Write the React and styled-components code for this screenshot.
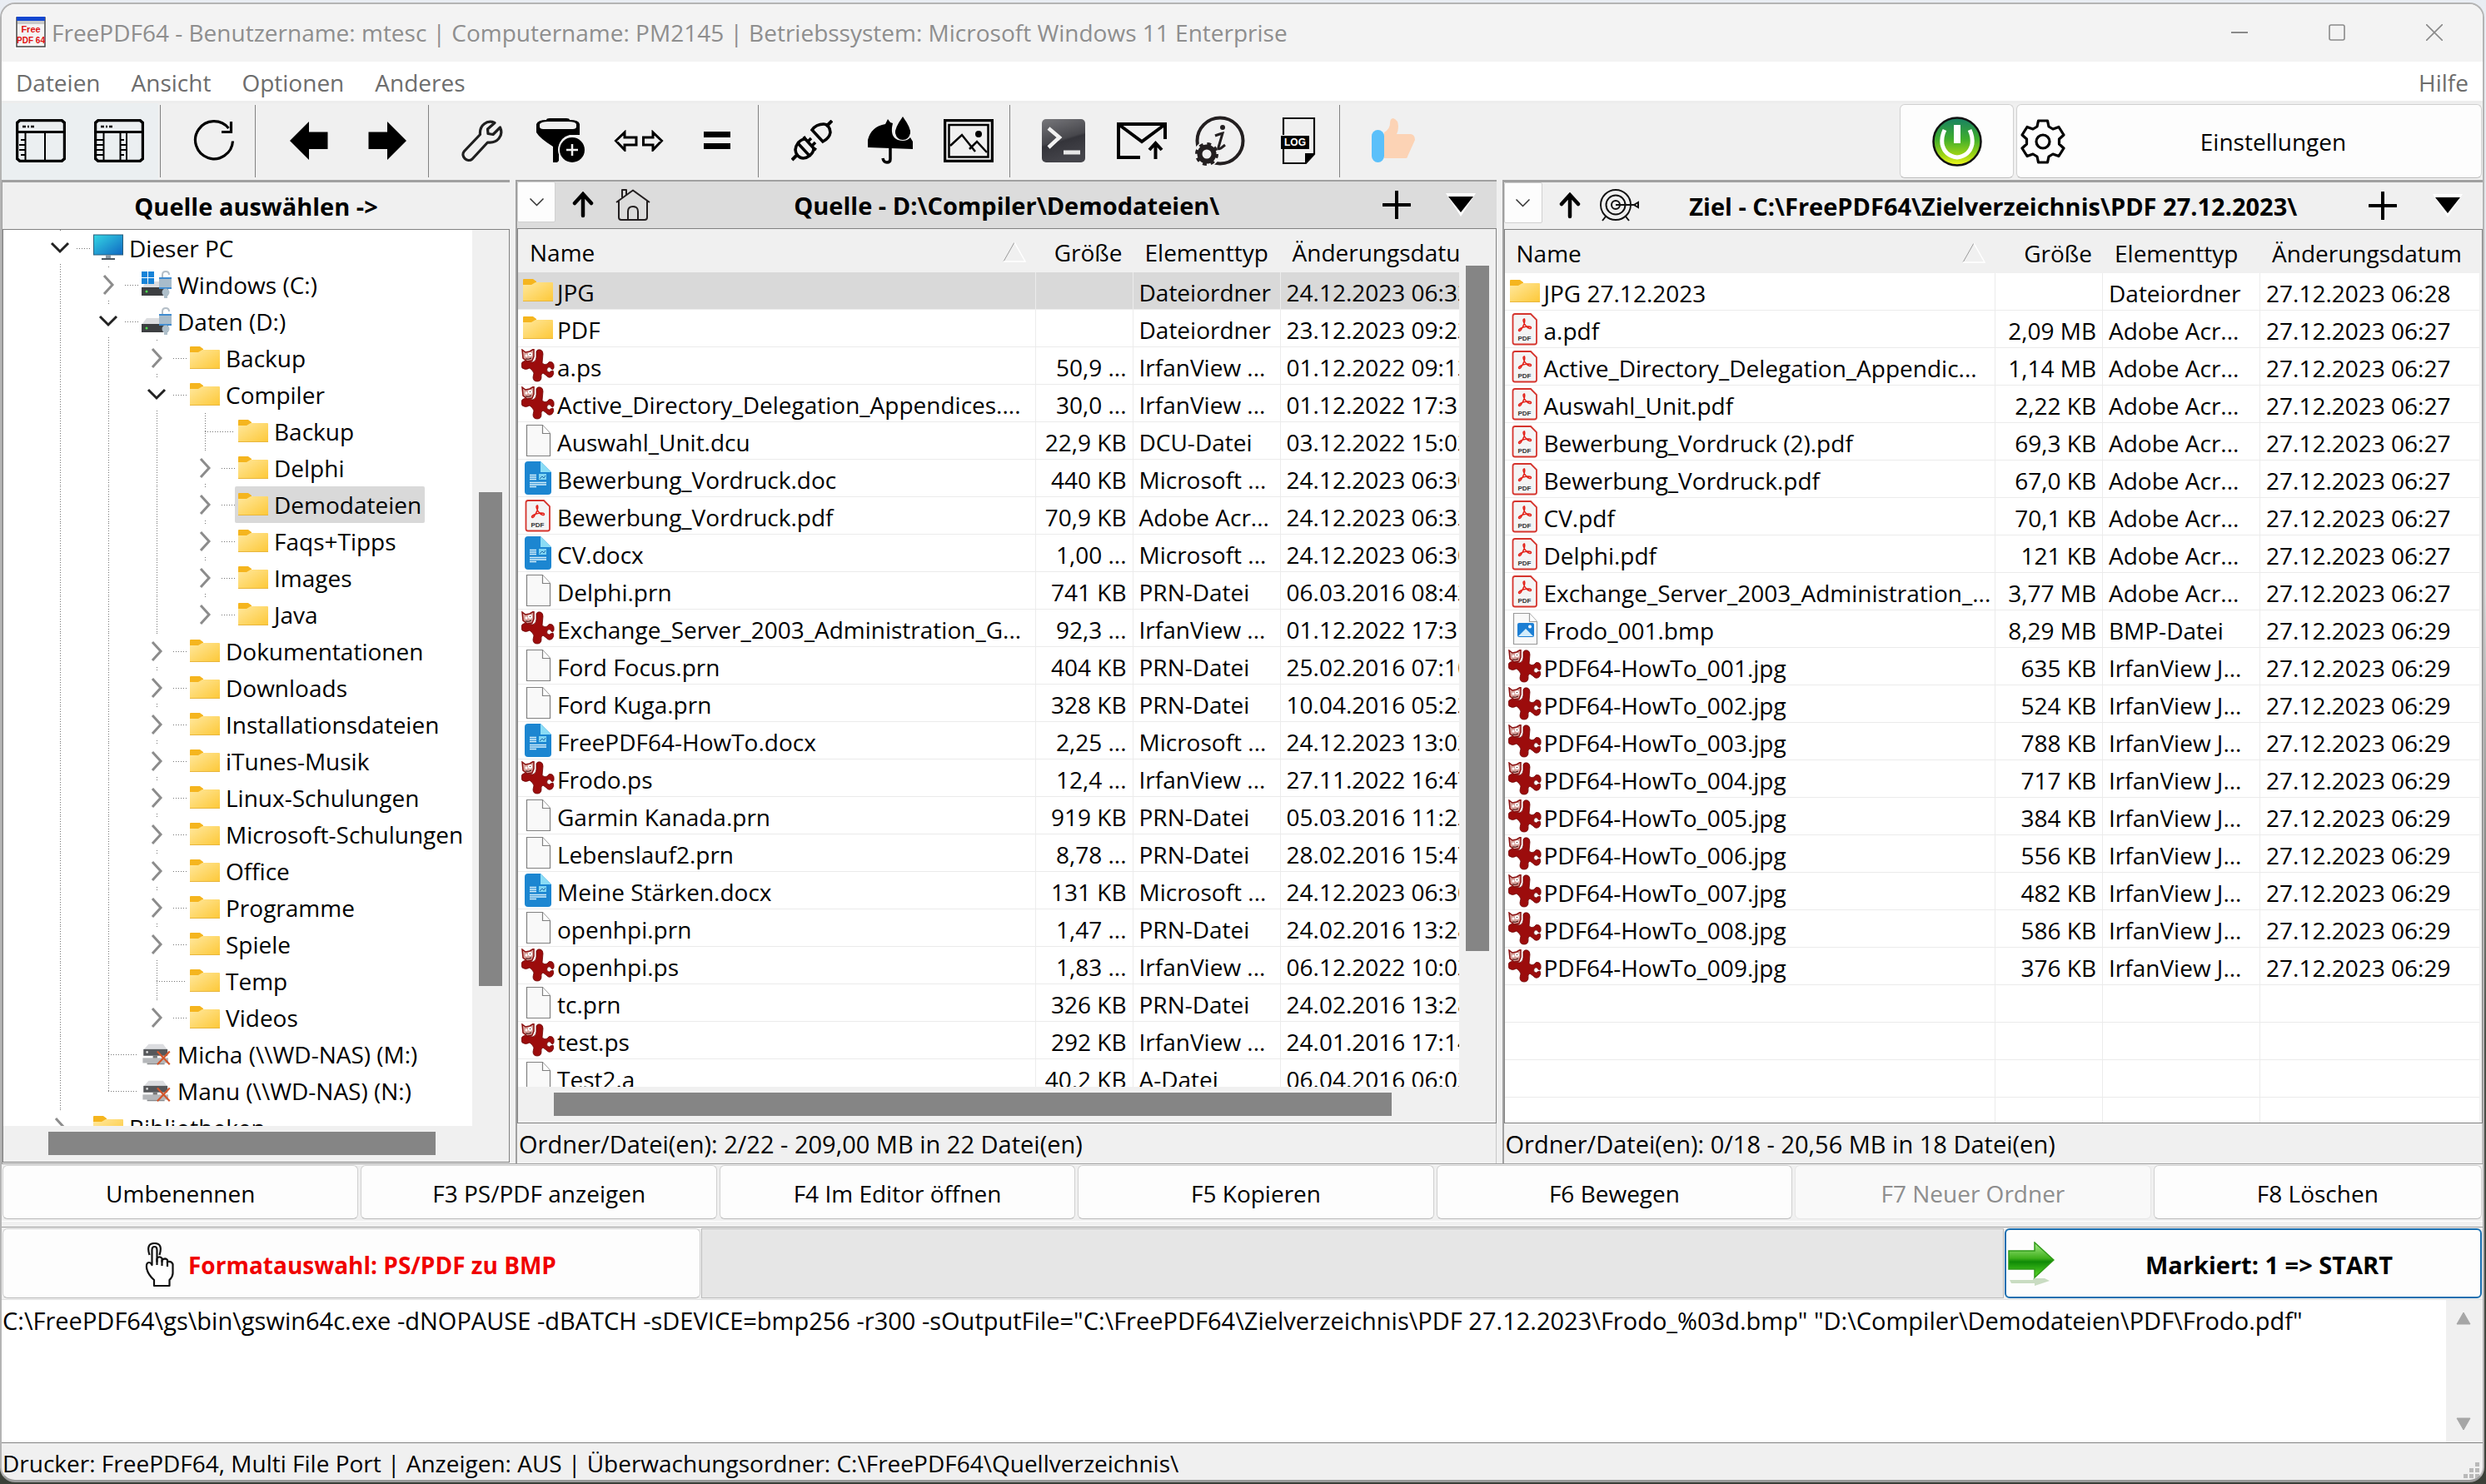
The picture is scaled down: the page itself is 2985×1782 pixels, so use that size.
import React from "react";
import styled, { createGlobalStyle, css } from "styled-components";

const FACE = "#f0f0f0";
const EDGE = "#a0a0a0";
const LINE = "#828282";
const THUMB = "#858585";
const SANS = '"Open Sans", "Noto Sans", sans-serif';

const GlobalStyle = createGlobalStyle`
  * { box-sizing: border-box; }
  html, body { margin: 0; height: 100%; }
  body {
    font-family: ${SANS};
    font-size: 28px;
    line-height: 40px;
    color: #000;
    background: linear-gradient(to bottom, #e9edf3 0, #d9d9d9 40%, #4b5048 70%, #3b4038 100%);
  }
  button, textarea {
    font: inherit;
    color: inherit;
    margin: 0;
    padding: 0;
    border: 0;
    background: none;
  }
  svg { display: block; flex: none; }
`;

/* ---------- window ---------- */

const Desktop = styled.div`
  height: 100vh;
  padding: 3px 2px 2px 0;
`;

const Window = styled.div`
  height: 100%;
  display: flex;
  flex-direction: column;
  overflow: hidden;
  background: ${FACE};
  border: 2px solid #b4b4b4;
  border-bottom: 3px solid #9a9a9a;
  border-radius: 18px;
`;

const TitleBar = styled.header`
  flex: none;
  display: flex;
  align-items: center;
  height: 69px;
  padding: 0 0 2px 16px;
  background: #f3f3f3;
`;

const WindowTitle = styled.h1`
  flex: 1;
  margin: 0 0 0 6px;
  font-size: inherit;
  font-weight: 400;
  color: #8e8e8e;
  white-space: nowrap;
`;

const CaptionButton = styled.button`
  width: 117px;
  height: 66px;
  display: grid;
  place-items: center;
`;

const MenuBar = styled.nav`
  flex: none;
  display: flex;
  gap: 37px;
  height: 50px;
  padding: 2px 17px 0;
  background: #fff;
  border-bottom: 3px solid #ededed;
  color: #6d6d6d;
`;

const MenuItem = styled.button`
  &:last-child { margin-left: auto; }
`;

/* ---------- toolbar ---------- */

const ToolBar = styled.div`
  flex: none;
  display: flex;
  align-items: stretch;
  height: 92px;
`;

const ToolButton = styled.button`
  width: 94px;
  display: grid;
  place-items: center;
  padding-bottom: 2px;
  background: ${(p) => (p.$pressed ? "#ebeff1" : "transparent")};
`;

const ToolDivider = styled.span`
  width: 20px;
  margin: 2px 0 3px;
  background: linear-gradient(${LINE}, ${LINE}) 2px 0 / 1px 100% no-repeat;
`;

const PushButton = styled.button`
  background: #fdfdfd;
  border: 1px solid #d0d0d0;
  border-bottom-color: #bababa;
  border-radius: 6px;
  text-align: center;
  white-space: nowrap;
  &:disabled { color: #8e8e8e; background: #f9f9f9; border-color: #e6e6e6; }
`;

const ToolActions = styled.div`
  display: flex;
  gap: 3px;
  margin-left: auto;
  padding: 1px 1px 2px 0;
`;

const PowerButton = styled(PushButton)`
  width: 137px;
  display: grid;
  place-items: center;
`;

const SettingsButton = styled(PushButton)`
  width: 559px;
  display: grid;
  grid-template-columns: 60px 1fr;
  align-items: center;
  padding: 0 6px 0 4px;
`;

/* ---------- panels ---------- */

const Panels = styled.main`
  flex: 1;
  min-height: 0;
  display: grid;
  grid-template-columns: 610px minmax(0, 1fr) minmax(0, 1fr);
  gap: 7px;
`;

const Panel = styled.section`
  min-width: 0;
  min-height: 0;
  display: flex;
  flex-direction: column;
  border-top: ${(p) => (p.$active ? 2 : 3)}px solid ${EDGE};
  border-left: ${(p) => (p.$files ? 2 : 1)}px solid ${EDGE};
`;

const PanelHead = styled.div`
  flex: none;
  display: grid;
  grid-template-columns: 1fr auto 1fr;
  height: 56px;
  background: ${(p) => (p.$active ? "#dcdcdc" : FACE)};
`;

const PanelTitle = styled.h2`
  grid-column: 2;
  margin: 0;
  padding-top: 9px;
  font-size: 29px;
  font-weight: 700;
  line-height: 40px;
  text-align: center;
  white-space: nowrap;
`;

const HeadTools = styled.div`
  display: flex;
  align-items: flex-start;
  justify-content: ${(p) => (p.$end ? "flex-end" : "flex-start")};
`;

const DropButton = styled.button`
  width: 46px;
  height: 49px;
  display: grid;
  place-items: center;
  background: #fdfdfd;
  border: 1px solid #d0d0d0;
  border-radius: 2px;
`;

const HeadButton = styled.button`
  width: ${(p) => p.$width}px;
  height: 56px;
  display: grid;
  place-items: center;
`;

const Well = styled.div`
  flex: 1;
  min-height: 0;
  display: grid;
  grid-template-columns: minmax(0, 1fr) ${(p) => (p.$scroll ? "44px" : "3px")};
  grid-template-rows: minmax(0, 1fr) ${(p) => (p.$scroll ? "43px" : "0")};
  background: ${FACE};
  border: 1px solid ${LINE};
  margin-bottom: ${(p) => (p.$flush ? 1 : 0)}px;
`;

const Pane = styled.div`
  min-width: 0;
  min-height: 0;
  overflow: hidden;
  background: #fff;
`;

const VTrack = styled.div`
  display: grid;
  grid-template-rows: ${(p) => p.$parts.map((n) => `${n}fr`).join(" ")};
  padding: 0 8px;
`;

const HTrack = styled.div`
  display: grid;
  grid-template-columns: ${(p) => p.$parts.map((n) => `${n}fr`).join(" ")};
  padding: 7px 0 8px;
`;

const VThumb = styled.div`
  grid-row: 2;
  background: ${THUMB};
`;

const HThumb = styled.div`
  grid-column: 2;
  background: ${THUMB};
`;

const PanelStatus = styled.div`
  flex: none;
  height: 48px;
  padding: 5px 0 0 2px;
  border-right: 1px solid #c8c8c8;
  font-size: 29px;
  white-space: nowrap;
`;

/* ---------- tree ---------- */

const Tree = styled.ul`
  margin: 0;
  padding: 0 0 0 39px;
  list-style: none;
`;

const TreeRow = styled.li`
  display: flex;
  height: 44px;
`;

const dotsV = "repeating-linear-gradient(to bottom, #777 0 1px, transparent 1px 3px)";
const dotsH = "repeating-linear-gradient(to right, #777 0 1px, transparent 1px 3px)";

const Guide = styled.span`
  flex: none;
  width: 58px;
  background: ${dotsV} 29px 0 / 1px 100% no-repeat;
`;

const Branch = styled.span`
  flex: none;
  width: 65px;
  padding-left: 17px;
  display: flex;
  align-items: center;
  ${(p) =>
    p.$kind === "leaf"
      ? css`
          background: ${dotsV} 29px 0 / 1px ${p.$last ? "50%" : "100%"} no-repeat,
            ${dotsH} 29px 22px / 36px 1px no-repeat;
        `
      : css`
          background: ${dotsV} 29px 0 / 1px 3px no-repeat,
            ${dotsV} 29px 41px / 1px ${p.$last ? "0" : "3px"} no-repeat,
            ${dotsH} 49px 22px / 16px 1px no-repeat;
        `}
`;

const Node = styled.button`
  display: flex;
  align-items: center;
  gap: 5px;
  padding: 0 4px 0 2px;
  border-radius: 2px;
  white-space: nowrap;
  background: ${(p) => (p.$selected ? "#d9d9d9" : "transparent")};
`;

/* ---------- file table ---------- */

const FileTable = styled.table`
  width: ${(p) => (p.$wide ? "calc(100% + 60px)" : "100%")};
  table-layout: fixed;
  border-collapse: separate;
  border-spacing: 0;
`;

const Head = styled.th`
  height: 52px;
  padding: ${(p) => (p.$right ? "3px 13px 0 0" : "3px 0 0 14px")};
  font-weight: 400;
  text-align: ${(p) => (p.$right ? "right" : "left")};
  white-space: nowrap;
  background: ${FACE};
`;

const NameHead = styled.div`
  display: flex;
  align-items: center;
  justify-content: space-between;
  padding-right: 12px;
`;

const FileRow = styled.tr`
  background: ${(p) => (p.$selected ? "#d9d9d9" : "#fff")};
`;

const Cell = styled.td`
  height: 45px;
  padding: ${(p) => (p.$right ? "3px 7px 0 0" : "3px 0 0 7px")};
  overflow: hidden;
  text-align: ${(p) => (p.$right ? "right" : "left")};
  white-space: nowrap;
  border-bottom: 1px solid #ebebeb;
  border-right: 1px solid #ececec;
  &:last-child { border-right: 0; }
`;

const NameCell = styled(Cell)`
  padding: 0 0 0 4px;
`;

const FileName = styled.span`
  display: flex;
  align-items: center;
  gap: 3px;
  height: 44px;
`;

const FileText = styled.span`
  padding-top: 3px;
`;

/* ---------- lower bars ---------- */

const FunctionBar = styled.div`
  flex: none;
  display: grid;
  grid-template-columns: repeat(6, 427fr) 394fr;
  gap: 3px;
  height: 70px;
  padding: 1px 1px 2px;
  border-top: 1px solid ${EDGE};
  border-bottom: 1px solid #fff;
`;

const FunctionButton = styled(PushButton)`
  padding-top: 3px;
`;

const ActionBar = styled.div`
  flex: none;
  display: grid;
  grid-template-columns: 838px 1fr 573px;
  gap: 1px;
  height: 88px;
  margin-top: 6px;
  padding: 1px;
  border-top: 1px solid ${EDGE};
  border-bottom: 1px solid #e2e2e2;
`;

const FormatButton = styled(PushButton)`
  display: flex;
  align-items: center;
  gap: 16px;
  padding: 3px 0 0 170px;
  color: #f00000;
  font-weight: 700;
`;

const Progress = styled.progress`
  appearance: none;
  width: 100%;
  height: 100%;
  border: 1px solid #bcbcbc;
  background: #e6e6e6;
  &::-webkit-progress-bar { background: #e6e6e6; }
`;

const StartButton = styled(PushButton)`
  display: grid;
  grid-template-columns: 60px 1fr;
  align-items: center;
  padding: 3px 0 0 2px;
  border: 2px solid #1a6fb0;
  font-size: 29px;
  font-weight: 700;
`;

const Console = styled.div`
  flex: none;
  display: grid;
  grid-template-columns: 1fr 44px;
  height: 171px;
`;

const ConsoleText = styled.textarea`
  resize: none;
  outline: 0;
  padding: 5px 0 0 1px;
  background: #fff;
  font-size: 29px;
  overflow: hidden;
`;

const ConsoleScroll = styled.div`
  display: flex;
  flex-direction: column;
  justify-content: space-between;
  align-items: center;
  padding: 14px 2px 14px 0;
`;

const StatusBar = styled.footer`
  flex: none;
  display: flex;
  align-items: flex-end;
  justify-content: space-between;
  height: 45px;
  padding: 0 3px 0 1px;
  border-top: 1px solid ${LINE};
  white-space: nowrap;
`;

/* ---------- icons ---------- */

const AppIcon = () => (
  <svg width="38" height="40" viewBox="0 0 38 40">
    <rect width="38" height="40" fill="#fff" />
    <rect x="2" y="2" width="34" height="35" fill="#f4f4f4" stroke="#444" strokeWidth="1.5" />
    <rect x="2" y="1" width="34" height="5" fill="#1347d0" />
    <rect x="3" y="6" width="32" height="4" fill="#c9c9c9" />
    <text x="19" y="20" fontSize="11" fontWeight="700" fill="#e01010" textAnchor="middle" fontFamily="Liberation Sans, sans-serif">Free</text>
    <text x="19" y="33" fontSize="10" fontWeight="700" fill="#e01010" textAnchor="middle" fontFamily="Liberation Sans, sans-serif">PDF 64</text>
  </svg>
);

const Minimize = () => (
  <svg width="20" height="20" viewBox="0 0 20 20"><path d="M0 10h20" stroke="#8a8a8a" strokeWidth="2" /></svg>
);
const Maximize = () => (
  <svg width="20" height="20" viewBox="0 0 20 20"><rect x="1" y="1" width="18" height="18" rx="2" fill="none" stroke="#8a8a8a" strokeWidth="1.6" /></svg>
);
const Close = () => (
  <svg width="20" height="20" viewBox="0 0 20 20"><path d="M0 0l20 20M20 0L0 20" stroke="#8a8a8a" strokeWidth="1.6" /></svg>
);

const LayoutOne = () => (
  <svg width="60" height="52" viewBox="0 0 60 52" fill="none" stroke="#000">
    <path d="M5 1.500h50l3.500 3v43l-3.500 3H5l-3.500-3v-43z" strokeWidth="3.500" />
    <path d="M2 15.500h56" strokeWidth="3" />
    <path d="M11.500 16v34M35 16v34" strokeWidth="2" />
    <path d="M8 9h4M14 9h2M18 9h4" strokeWidth="2.500" />
    <path d="M6 25h5M4 31h8M4 37h8M6 43h5" strokeWidth="2" />
  </svg>
);
const LayoutTwo = () => (
  <svg width="60" height="52" viewBox="0 0 60 52" fill="none" stroke="#000">
    <path d="M5 1.500h50l3.500 3v43l-3.500 3H5l-3.500-3v-43z" strokeWidth="3.500" />
    <path d="M2 15.500h56" strokeWidth="3" />
    <path d="M11.500 16v34M31.500 16v34M39 16v34" strokeWidth="2" />
    <path d="M8 9h4M14 9h2M18 9h4" strokeWidth="2.500" />
    <path d="M3 25h8M3 31h8M3 37h8M3 43h8M32 25h4M32 31h7M32 37h7M32 43h4" strokeWidth="2" />
  </svg>
);
const Refresh = () => (
  <svg width="50" height="52" viewBox="0 0 50 52" fill="none" stroke="#000" strokeWidth="3.200">
    <path d="M47.500 26.500a22.500 22.500 0 1 1-5-15.500" />
    <path d="M45.500 3v12.500H34" />
  </svg>
);
const ArrowLeft = () => (
  <svg width="46" height="46" viewBox="0 0 46 46"><path d="M0 23L23 0v12.500h22.500v20.500H23V46z" /></svg>
);
const ArrowRight = () => (
  <svg width="46" height="46" viewBox="0 0 46 46"><path d="M46 23L23 0v12.500H.5v20.500H23V46z" /></svg>
);
const Wrench = () => (
  <svg width="50" height="52" viewBox="0 0 50 52" fill="none" stroke="#1f1f1f" strokeWidth="3.200" strokeLinejoin="round">
    <path d="M40 4.500C31 .5 21.500 7 22.500 18.500L3.500 38.500c-5 6 3.500 14.500 9.500 9.500l18.500-20C43 29.500 51 20 46.500 10L38 18.500l-6-1-.5-5.500z" />
  </svg>
);
const FunnelPlus = () => (
  <svg width="58" height="54" viewBox="0 0 58 54">
    <path d="M0 7Q2 2 12 2q0-2 4-2h20q4 0 4 2 11 0 12 5v13H40q-12 3-13 15v16l-2 2h-5V34Q4 24 0 17z" />
    <path d="M4 7q2-3 10-3h24q9 0 10 3v4q-1 2-4 2H8q-3 0-4-2z" fill="#f0f0f0" />
    <circle cx="43" cy="38" r="17" fill="#f0f0f0" />
    <circle cx="43" cy="38" r="15" />
    <path d="M43 31v14M36 38h14" stroke="#f0f0f0" strokeWidth="2.500" />
  </svg>
);
const ArrowsApart = () => (
  <svg width="60" height="26" viewBox="0 0 60 26" fill="none" stroke="#000" strokeWidth="3">
    <path d="M2.500 13L13 3v6h14v9H13v6zM57.500 13L47 3v6H35.500v9H47v6z" />
  </svg>
);
const Equals = () => (
  <svg width="32" height="22" viewBox="0 0 32 22"><path d="M0 0h32v7H0zM0 14h32v7H0z" /></svg>
);
const Plug = () => (
  <svg width="50" height="50" viewBox="0 0 50 50" fill="none" stroke="#000" strokeWidth="3.500">
    <path d="M1 48l7-7M42 8l7-7" strokeWidth="4" />
    <path d="M8 28l14 15q-8 6-14 0-6-7 0-15zM8 28q4-5 9-5l-2-3M22 43q5-4 5-9l3 2" />
    <path d="M17 23l10 11M20 26l4-4M25 31l4-4" />
    <path d="M25 12l13 14q8-4 9-11Q46 5 39 5q-9 0-14 7z" />
  </svg>
);
const Umbrella = () => (
  <svg width="54" height="58" viewBox="0 0 54 58">
    <path d="M0 37V28Q4 12 21 9l3-6 3 4 3 1q-4 16 6 20 10 3 15-3l3 5v9z" />
    <path d="M27 37v14q0 4-4 4t-5-5" fill="none" stroke="#000" strokeWidth="3.500" />
    <path d="M42 0q10 14 9 20-2 8-9 8t-9-8Q32 14 42 0z" />
  </svg>
);
const Picture = () => (
  <svg width="60" height="52" viewBox="0 0 60 52" fill="none" stroke="#000">
    <rect x="1.500" y="1.500" width="57" height="49" strokeWidth="3.500" />
    <rect x="6.500" y="7" width="47" height="38.500" strokeWidth="2.500" />
    <path d="M8 32l14-13 16 20M31 36l9-9 12 13" strokeWidth="2.500" />
    <circle cx="42" cy="18" r="4" fill="#000" stroke="none" />
  </svg>
);
const Terminal = () => (
  <svg width="52" height="52" viewBox="0 0 52 52">
    <defs>
      <linearGradient id="term" x1="0" y1="0" x2="0.300" y2="1">
        <stop offset="0" stopColor="#77777b" />
        <stop offset="0.550" stopColor="#47474c" />
        <stop offset="0.600" stopColor="#34343a" />
        <stop offset="1" stopColor="#44444a" />
      </linearGradient>
    </defs>
    <rect width="52" height="52" rx="5" fill="url(#term)" />
    <path d="M8 11l13 11L8 34" fill="none" stroke="#f2f2f2" strokeWidth="4.500" />
    <path d="M26 40h20" stroke="#e6e6e6" strokeWidth="5" />
  </svg>
);
const MailUp = () => (
  <svg width="60" height="46" viewBox="0 0 60 46" fill="none" stroke="#000">
    <path d="M28 43H2V3h56v18" strokeWidth="4" />
    <path d="M3 4l27 20L57 4" strokeWidth="4" />
    <path d="M46.500 45V28M39 34l7.500-8 7.500 8" strokeWidth="4" />
  </svg>
);
const InfoGear = () => (
  <svg width="60" height="60" viewBox="0 0 60 60">
    <circle cx="30" cy="30" r="27.500" fill="none" stroke="#231f20" strokeWidth="4" />
    <circle cx="14" cy="46" r="15.500" fill="#f0f0f0" />
    <circle cx="14" cy="46" r="8.500" fill="none" stroke="#231f20" strokeWidth="6" />
    <circle cx="14" cy="46" r="12" fill="none" stroke="#231f20" strokeWidth="4" strokeDasharray="4.700 4.725" />
    <circle cx="33" cy="14" r="3" fill="#231f20" />
    <path d="M24 24q5-2 9-3l-5 17q-1 3 3 1l5-4" fill="none" stroke="#231f20" strokeWidth="3" />
  </svg>
);
const LogFile = () => (
  <svg width="42" height="58" viewBox="0 0 42 58">
    <path d="M3 22V2h37v43L30 56H3V38" fill="none" stroke="#111" strokeWidth="2.200" />
    <path d="M29 56V44h12z" />
    <rect y="23" width="34" height="16" />
    <text x="17" y="35" fontSize="12" fontWeight="700" fill="#fff" textAnchor="middle" fontFamily="Liberation Sans, sans-serif">LOG</text>
  </svg>
);
const Thumb = () => (
  <svg width="52" height="54" viewBox="0 0 52 54">
    <path d="M15 17q7-4 7-11 0-6 4-6 6 2 6 10 0 5-2 9h17q5 1 5 7l-9 20q0 2-3 2H15z" fill="#fcd3b5" />
    <rect y="14" width="15" height="39" rx="7.500" fill="#5bc0fa" />
  </svg>
);
const Power = () => (
  <svg width="60" height="60" viewBox="0 0 60 60">
    <defs>
      <linearGradient id="pow" x1="0" y1="0" x2="0" y2="1">
        <stop offset="0" stopColor="#178064" />
        <stop offset="0.450" stopColor="#3fae2c" />
        <stop offset="0.800" stopColor="#a3d614" />
        <stop offset="1" stopColor="#f4fb20" />
      </linearGradient>
    </defs>
    <circle cx="30" cy="30" r="28.500" fill="url(#pow)" stroke="#111" strokeWidth="2.500" />
    <path d="M15 16q-4 8-3 17 3 14 18 16 15-2 18-16 1-9-3-17" fill="none" stroke="#fff" strokeWidth="5" />
    <path d="M30 10v22" stroke="#fff" strokeWidth="8" />
  </svg>
);
const Gear = () => (
  <svg width="54" height="54" viewBox="0 0 54 54" fill="none" stroke="#000" strokeWidth="3.200" strokeLinejoin="round">
    <path d="M21.500 2h11l1.500 7 5 3 7-2.500 6 9.500-5.500 5v6l5.500 5-6 9.500-7-2.500-5 3-1.500 7h-11l-1.500-7-5-3-7 2.500-6-9.500 5.500-5v-6l-5.500-5 6-9.500 7 2.500 5-3z" />
    <circle cx="27" cy="27" r="8" />
  </svg>
);
const SmallDown = () => (
  <svg width="17" height="10" viewBox="0 0 17 10"><path d="M.5 .5l8 8 8-8" fill="none" stroke="#333" strokeWidth="1.500" /></svg>
);
const UpArrow = () => (
  <svg width="26" height="32" viewBox="0 0 26 32" fill="none" stroke="#000" strokeWidth="4.500" strokeLinecap="round"><path d="M13 29V4M3 14L13 3l10 11" /></svg>
);
const House = () => (
  <svg width="42" height="40" viewBox="0 0 42 40" fill="none" stroke="#231f20" strokeWidth="2" strokeLinejoin="round">
    <path d="M1 17L21 2.500 41 17M4 15v20q0 3 3 3h28q3 0 3-3V15M8 12V2h5v6M15 38V28q0-6 6-6t6 6v10" />
  </svg>
);
const Target = () => (
  <svg width="48" height="40" viewBox="0 0 48 40" fill="none" stroke="#111" strokeWidth="2">
    <circle cx="19" cy="19" r="18" /><circle cx="19" cy="19" r="11.500" /><circle cx="19" cy="19" r="5" />
    <path d="M19 19h22M7 33l-4 5M31 33l4 5" />
    <path d="M41 19l5-3v6z" />
  </svg>
);
const Plus = () => (
  <svg width="34" height="34" viewBox="0 0 34 34"><path d="M17 1v32M1 17h32" stroke="#000" strokeWidth="4" strokeLinecap="round" /></svg>
);
const Triangle = () => (
  <svg width="38" height="30" viewBox="0 0 38 30"><path d="M1 1h36L19 29z" fill="#fff" /><path d="M4 5h30L19 24z" /></svg>
);
const SortMark = () => (
  <svg width="28" height="25" viewBox="0 0 28 25" fill="none"><path d="M1 24L14 1" stroke="#9a9a9a" /><path d="M14 1l13 23H1" stroke="#fff" strokeWidth="1.500" /></svg>
);
const ChevronOpen = () => (
  <svg width="24" height="16" viewBox="0 0 24 16"><path d="M2 2l10 10L22 2" fill="none" stroke="#222" strokeWidth="3" /></svg>
);
const ChevronClosed = () => (
  <svg width="24" height="24" viewBox="0 0 24 24"><path d="M7 1l10 11L7 23" fill="none" stroke="#8c8c8c" strokeWidth="3" /></svg>
);
const ArrowTri = ({ down }) => (
  <svg width="18" height="16" viewBox="0 0 18 16"><path d={down ? "M1 1h16L9 15z" : "M1 15h16L9 1z"} fill="#a6a6a6" stroke="#a6a6a6" strokeLinejoin="round" /></svg>
);
const Finger = () => (
  <svg width="36" height="54" viewBox="0 0 36 54" fill="none" stroke="#111" strokeWidth="2.200" strokeLinejoin="round">
    <path d="M11 52v-7Q3 38 2 30q-.5-6 3-6 2 0 3.500 3V9q0-4 3-4t3 4v14V19q3-3 6 0v4-2q4-3 6.500 0v4-2q5-1 6.500 3v11q0 4-4 8v7z" fill="#fff" />
    <path d="M5.500 15Q1 1 11.500 1T17.500 15" />
    <path d="M14.500 19v8M20.500 21v7M27 23v6" />
  </svg>
);
const GreenArrow = () => (
  <svg width="56" height="56" viewBox="0 0 56 56">
    <defs>
      <linearGradient id="go" x1="0" y1="0" x2="0" y2="1">
        <stop offset="0" stopColor="#a9ec8c" />
        <stop offset="0.450" stopColor="#3fb01c" />
        <stop offset="0.550" stopColor="#0f8a06" />
        <stop offset="1" stopColor="#5cdc28" />
      </linearGradient>
    </defs>
    <path d="M2 46h28v-2h14l6 3-18 6v-3H4z" fill="#c9dcc2" />
    <path d="M1 11h31V1l23 21-23 21V33H1z" fill="url(#go)" stroke="#2f9a18" strokeWidth="1.500" />
  </svg>
);
const Grip = () => (
  <svg width="20" height="22" viewBox="0 0 20 22" fill="#b9b9b9">
    <path d="M14 1h5v5h-5zM14 8h5v5h-5zM7 8h5v5H7zM14 15h5v5h-5zM7 15h5v5H7zM0 15h5v5H0z" />
  </svg>
);

const Folder = () => (
  <svg width="40" height="30" viewBox="0 0 40 30">
    <defs>
      <linearGradient id="fold" x1="0" y1="0" x2="1" y2="1">
        <stop offset="0" stopColor="#ffe89e" />
        <stop offset="1" stopColor="#fdc837" />
      </linearGradient>
    </defs>
    <path d="M2 2q0-1 1-1h11l4 3v5H2z" fill="#f5b51e" />
    <path d="M2 8h10l5-3h20q1 0 1 1v21q0 1-1 1H3q-1 0-1-1z" fill="url(#fold)" />
    <path d="M2 27.500h36" stroke="#e8b63d" />
  </svg>
);
const Monitor = () => (
  <svg width="40" height="34" viewBox="0 0 40 34">
    <defs>
      <linearGradient id="mon" x1="0" y1="0" x2="1" y2="1">
        <stop offset="0" stopColor="#35d6e4" />
        <stop offset="1" stopColor="#0f67c2" />
      </linearGradient>
    </defs>
    <rect x="2.500" y="1" width="35" height="24" fill="url(#mon)" stroke="#2a5f7c" />
    <path d="M17 25h6v4h-6z" fill="#8a99a5" /><path d="M12 29h16v2H12z" fill="#4b5660" />
  </svg>
);
const Drive = ({ system }) => (
  <svg width="40" height="36" viewBox="0 0 40 36">
    <path d="M8 14h24l4 8H2z" fill="#dcdde0" />
    <rect x="2" y="21" width="32" height="10" fill="#3d3f42" />
    <circle cx="8" cy="26" r="1.500" fill="#4ee04e" />
    {system && <path d="M2 2h7v7H2zM10 2h7v7h-7zM2 10h7v7H2zM10 10h7v7h-7z" fill="#1683d8" />}
    <path d="M27 9V6q0-4 4-4t4 4" fill="none" stroke="#b4bec7" strokeWidth="2" />
    <rect x="23" y="9" width="15" height="14" fill="#a8bccb" />
    <path d="M23 10h15M23 22h15" stroke="#3f8bd0" strokeWidth="2" />
    <circle cx="31" cy="27" r="4.500" fill="#aebfca" /><path d="M31 29v5" stroke="#aebfca" strokeWidth="4" />
  </svg>
);
const NetDrive = () => (
  <svg width="40" height="28" viewBox="0 0 40 32">
    <path d="M9 2h20l6 8H2z" fill="#dcdde0" />
    <rect x="2" y="9" width="33" height="9" fill="#55575a" />
    <circle cx="7" cy="13" r="1.500" fill="#ddd" />
    <path d="M15 18h6v4h-6z" fill="#777" />
    <rect x="1" y="21" width="35" height="7" fill="#b5b7ba" /><path d="M7 28h24v2H7z" fill="#8a8c8f" />
    <path d="M21 12l17 18M38 12L21 30" stroke="#d2562c" strokeWidth="2.500" />
  </svg>
);
const Blank = () => (
  <svg width="40" height="40" viewBox="0 0 40 40">
    <path d="M6.500 1.500h19l9 10v27h-28z" fill="#f9f9f9" stroke="#808080" strokeWidth="1.200" />
    <path d="M25.500 1.500v10h9" fill="#fff" stroke="#808080" strokeWidth="1.200" />
  </svg>
);
const Word = () => (
  <svg width="40" height="40" viewBox="0 0 40 40">
    <path d="M8 0h15l13 13v23q0 4-4 4H8q-4 0-4-4V4q0-4 4-4z" fill="#1c86d1" />
    <path d="M23 0l13 13H23z" fill="#8adcf5" />
    <path d="M10 16.500h8M10 19h8M10 21.500h8M10 25.500h20M10 28h20M10 30.500h8" stroke="#d6effa" strokeWidth="1.300" />
    <rect x="21" y="15" width="9" height="7" fill="#7fd4f2" /><path d="M22 21l3-3 2 2 2-3" stroke="#1c6aa8" fill="none" />
  </svg>
);
const Pdf = () => (
  <svg width="40" height="40" viewBox="0 0 40 40">
    <path d="M8 2h19l7 7v27q0 2.500-2.500 2.500H8q-2.500 0-2.500-2.500V4.500Q5.500 2 8 2z" fill="#f4f4f4" stroke="#d5342d" strokeWidth="1.800" />
    <path d="M19.500 8c-2.500 0-1.500 4 1 7.500 3 4 7 5 7 3 0-2.500-8-2-13 1-3.500 2-1.500 4.500.5 2 2-3 6-10 4.500-13.500z" fill="none" stroke="#e3231b" strokeWidth="1.500" />
    <text x="19.500" y="34" fontSize="8" fontWeight="700" fill="#333" textAnchor="middle" fontFamily="Liberation Sans, sans-serif">PDF</text>
  </svg>
);
const Irfan = () => (
  <svg width="40" height="40" viewBox="0 0 40 40">
    <path d="M18 3q1-3 5-2 3 1 3 5l-1 11q3 3 6 1 2-4 6-2 3 2 2 7-1 3-3 1-1-3-4-2-2 2-1 5 3 2 4 0l3-1q2 4-1 7-4 3-7-1l-4-3q-3 1-2 5 0 5-5 5-5 0-5-5l1-5q-2-4-5-6-5 3-9 0-2-4 0-7 3-3 7-1l6 1q4-2 4-6z" fill="#9c0c0c" stroke="#6d0606" strokeWidth=".8" />
    <path d="M1 1l4 3 5-1 5-3v9l-2 5-6 1-5-4z" fill="#d7a19b" stroke="#8a1010" strokeWidth="1.500" />
    <circle cx="10.500" cy="6.500" r="2.500" fill="#fff" /><circle cx="6" cy="8" r="1.500" fill="#fff" />
    <path d="M10 6.500h1M5 12q4 1 7-1" stroke="#300" fill="none" />
  </svg>
);
const Bitmap = () => (
  <svg width="40" height="40" viewBox="0 0 40 40">
    <path d="M6.500 1.500h19l9 10v27h-28z" fill="#f9f9f9" stroke="#9a9a9a" strokeWidth="1.200" />
    <path d="M25.500 1.500v10h9" fill="#fff" stroke="#9a9a9a" strokeWidth="1.200" />
    <rect x="11" y="13" width="20" height="17" rx="2" fill="#1d7fd4" />
    <path d="M12 29l9-9 9 9z" fill="#d4edfb" /><circle cx="26" cy="17.500" r="2" fill="#fff" />
  </svg>
);

const ICONS = { folder: Folder, pc: Monitor, drive: Drive, net: NetDrive, blank: Blank, word: Word, pdf: Pdf, irfan: Irfan, bmp: Bitmap };

/* ---------- data ---------- */

const MENU = ["Dateien", "Ansicht", "Optionen", "Anderes", "Hilfe"];

const TOOL_GROUPS = [
  [["Ansicht mit Baum", LayoutOne, true], ["Ansicht mit Spalten", LayoutTwo, true]],
  [["Aktualisieren", Refresh]],
  [["Zurück", ArrowLeft], ["Vor", ArrowRight]],
  [["Werkzeuge", Wrench], ["Filter", FunnelPlus], ["Tauschen", ArrowsApart], ["Gleichsetzen", Equals]],
  [["Verbinden", Plug], ["Wasserzeichen", Umbrella], ["Bild", Picture]],
  [["Konsole", Terminal], ["E-Mail", MailUp], ["Info", InfoGear], ["Protokoll", LogFile]],
  [["Danke", Thumb]],
];

const TREE = [
  [0, "open", "pc", "Dieser PC"],
  [1, "closed", "system", "Windows (C:)"],
  [1, "open", "drive", "Daten (D:)"],
  [2, "closed", "folder", "Backup"],
  [2, "open", "folder", "Compiler"],
  [3, "leaf", "folder", "Backup"],
  [3, "closed", "folder", "Delphi"],
  [3, "closed", "folder", "Demodateien", { selected: true }],
  [3, "closed", "folder", "Faqs+Tipps"],
  [3, "closed", "folder", "Images"],
  [3, "closed", "folder", "Java", { last: true }],
  [2, "closed", "folder", "Dokumentationen"],
  [2, "closed", "folder", "Downloads"],
  [2, "closed", "folder", "Installationsdateien"],
  [2, "closed", "folder", "iTunes-Musik"],
  [2, "closed", "folder", "Linux-Schulungen"],
  [2, "closed", "folder", "Microsoft-Schulungen"],
  [2, "closed", "folder", "Office"],
  [2, "closed", "folder", "Programme"],
  [2, "closed", "folder", "Spiele"],
  [2, "leaf", "folder", "Temp"],
  [2, "closed", "folder", "Videos", { last: true }],
  [1, "leaf", "net", "Micha (\\\\WD-NAS) (M:)"],
  [1, "leaf", "net", "Manu (\\\\WD-NAS) (N:)", { last: true }],
  [0, "closed", "folder", "Bibliotheken"],
];

const SOURCE = [
  ["folder", "JPG", "", "Dateiordner", "24.12.2023 06:33"],
  ["folder", "PDF", "", "Dateiordner", "23.12.2023 09:23"],
  ["irfan", "a.ps", "50,9 ...", "IrfanView ...", "01.12.2022 09:13"],
  ["irfan", "Active_Directory_Delegation_Appendices....", "30,0 ...", "IrfanView ...", "01.12.2022 17:31"],
  ["blank", "Auswahl_Unit.dcu", "22,9 KB", "DCU-Datei", "03.12.2022 15:03"],
  ["word", "Bewerbung_Vordruck.doc", "440 KB", "Microsoft ...", "24.12.2023 06:30"],
  ["pdf", "Bewerbung_Vordruck.pdf", "70,9 KB", "Adobe Acr...", "24.12.2023 06:33"],
  ["word", "CV.docx", "1,00 ...", "Microsoft ...", "24.12.2023 06:30"],
  ["blank", "Delphi.prn", "741 KB", "PRN-Datei", "06.03.2016 08:43"],
  ["irfan", "Exchange_Server_2003_Administration_G...", "92,3 ...", "IrfanView ...", "01.12.2022 17:31"],
  ["blank", "Ford Focus.prn", "404 KB", "PRN-Datei", "25.02.2016 07:10"],
  ["blank", "Ford Kuga.prn", "328 KB", "PRN-Datei", "10.04.2016 05:23"],
  ["word", "FreePDF64-HowTo.docx", "2,25 ...", "Microsoft ...", "24.12.2023 13:03"],
  ["irfan", "Frodo.ps", "12,4 ...", "IrfanView ...", "27.11.2022 16:47"],
  ["blank", "Garmin Kanada.prn", "919 KB", "PRN-Datei", "05.03.2016 11:23"],
  ["blank", "Lebenslauf2.prn", "8,78 ...", "PRN-Datei", "28.02.2016 15:47"],
  ["word", "Meine Stärken.docx", "131 KB", "Microsoft ...", "24.12.2023 06:30"],
  ["blank", "openhpi.prn", "1,47 ...", "PRN-Datei", "24.02.2016 13:28"],
  ["irfan", "openhpi.ps", "1,83 ...", "IrfanView ...", "06.12.2022 10:03"],
  ["blank", "tc.prn", "326 KB", "PRN-Datei", "24.02.2016 13:28"],
  ["irfan", "test.ps", "292 KB", "IrfanView ...", "24.01.2016 17:14"],
  ["blank", "Test2.a", "40,2 KB", "A-Datei", "06.04.2016 06:03"],
];

const jpg = (n, size) => ["irfan", `PDF64-HowTo_00${n}.jpg`, `${size} KB`, "IrfanView J...", "27.12.2023 06:29"];

const TARGET = [
  ["folder", "JPG 27.12.2023", "", "Dateiordner", "27.12.2023 06:28"],
  ["pdf", "a.pdf", "2,09 MB", "Adobe Acr...", "27.12.2023 06:27"],
  ["pdf", "Active_Directory_Delegation_Appendic...", "1,14 MB", "Adobe Acr...", "27.12.2023 06:27"],
  ["pdf", "Auswahl_Unit.pdf", "2,22 KB", "Adobe Acr...", "27.12.2023 06:27"],
  ["pdf", "Bewerbung_Vordruck (2).pdf", "69,3 KB", "Adobe Acr...", "27.12.2023 06:27"],
  ["pdf", "Bewerbung_Vordruck.pdf", "67,0 KB", "Adobe Acr...", "27.12.2023 06:27"],
  ["pdf", "CV.pdf", "70,1 KB", "Adobe Acr...", "27.12.2023 06:27"],
  ["pdf", "Delphi.pdf", "121 KB", "Adobe Acr...", "27.12.2023 06:27"],
  ["pdf", "Exchange_Server_2003_Administration_...", "3,77 MB", "Adobe Acr...", "27.12.2023 06:27"],
  ["bmp", "Frodo_001.bmp", "8,29 MB", "BMP-Datei", "27.12.2023 06:29"],
  jpg(1, 635), jpg(2, 524), jpg(3, 788), jpg(4, 717), jpg(5, 384), jpg(6, 556), jpg(7, 482), jpg(8, 586), jpg(9, 376),
];

const FUNCTIONS = ["Umbenennen", "F3 PS/PDF anzeigen", "F4 Im Editor öffnen", "F5 Kopieren", "F6 Bewegen", "F7 Neuer Ordner", "F8 Löschen"];

const COMMAND =
  'C:\\FreePDF64\\gs\\bin\\gswin64c.exe -dNOPAUSE -dBATCH -sDEVICE=bmp256 -r300 -sOutputFile="C:\\FreePDF64\\Zielverzeichnis\\PDF 27.12.2023\\Frodo_%03d.bmp" "D:\\Compiler\\Demodateien\\PDF\\Frodo.pdf"';

/* ---------- parts ---------- */

function TreeItem({ level, kind, icon, label, selected, last }) {
  const Icon = icon === "system" ? Drive : ICONS[icon];
  return (
    <TreeRow>
      {Array.from({ length: level }, (_, i) => <Guide key={i} />)}
      <Branch $kind={kind} $last={last}>
        {kind === "open" && <ChevronOpen />}
        {kind === "closed" && <ChevronClosed />}
      </Branch>
      <Node $selected={selected}>
        <Icon system={icon === "system" || undefined} />
        <span>{label}</span>
      </Node>
    </TreeRow>
  );
}

function Files({ rows, widths, wide, selected, spare = 0 }) {
  return (
    <FileTable $wide={wide}>
      <colgroup>
        <col />
        {widths.map((w, i) => <col key={i} width={w} />)}
      </colgroup>
      <thead>
        <tr>
          <Head><NameHead>Name<SortMark /></NameHead></Head>
          <Head $right>Größe</Head>
          <Head>Elementtyp</Head>
          <Head>Änderungsdatum</Head>
        </tr>
      </thead>
      <tbody>
        {rows.map(([icon, name, size, type, date], i) => {
          const Icon = ICONS[icon];
          return (
            <FileRow key={name} $selected={i === selected}>
              <NameCell><FileName><Icon /><FileText>{name}</FileText></FileName></NameCell>
              <Cell $right>{size}</Cell>
              <Cell>{type}</Cell>
              <Cell>{date}</Cell>
            </FileRow>
          );
        })}
        {Array.from({ length: spare }, (_, i) => (
          <FileRow key={`spare${i}`}><Cell /><Cell /><Cell /><Cell /></FileRow>
        ))}
      </tbody>
    </FileTable>
  );
}

function FilePanel({ title, active, home: Home, status, children }) {
  return (
    <Panel $files $active={active}>
      <PanelHead $active={active}>
        <HeadTools>
          <DropButton aria-label="Laufwerk wählen"><SmallDown /></DropButton>
          <HeadButton $width={66} aria-label="Übergeordneter Ordner"><UpArrow /></HeadButton>
          <HeadButton $width={54} aria-label="Startordner"><Home /></HeadButton>
        </HeadTools>
        <PanelTitle>{title}</PanelTitle>
        <HeadTools $end>
          <HeadButton $width={70} aria-label="Hinzufügen"><Plus /></HeadButton>
          <HeadButton $width={85} aria-label="Verlauf"><Triangle /></HeadButton>
        </HeadTools>
      </PanelHead>
      {children}
      <PanelStatus>{status}</PanelStatus>
    </Panel>
  );
}

export default function App() {
  return (
    <>
      <GlobalStyle />
      <Desktop>
        <Window>
          <TitleBar>
            <AppIcon />
            <WindowTitle>FreePDF64 - Benutzername: mtesc | Computername: PM2145 | Betriebssystem: Microsoft Windows 11 Enterprise</WindowTitle>
            <CaptionButton aria-label="Minimieren"><Minimize /></CaptionButton>
            <CaptionButton aria-label="Maximieren"><Maximize /></CaptionButton>
            <CaptionButton aria-label="Schließen"><Close /></CaptionButton>
          </TitleBar>
          <MenuBar>{MENU.map((m) => <MenuItem key={m}>{m}</MenuItem>)}</MenuBar>
          <ToolBar>
            {TOOL_GROUPS.map((group, g) => (
              <React.Fragment key={g}>
                {g > 0 && <ToolDivider />}
                {group.map(([name, Icon, pressed]) => (
                  <ToolButton key={name} aria-label={name} $pressed={pressed}><Icon /></ToolButton>
                ))}
              </React.Fragment>
            ))}
            <ToolActions>
              <PowerButton aria-label="Ein/Aus"><Power /></PowerButton>
              <SettingsButton><Gear /><span>Einstellungen</span></SettingsButton>
            </ToolActions>
          </ToolBar>

          <Panels>
            <Panel>
              <PanelHead><PanelTitle>Quelle auswählen -&gt;</PanelTitle></PanelHead>
              <Well $scroll $flush>
                <Pane>
                  <Tree>
                    {TREE.map(([level, kind, icon, label, extra], i) => (
                      <TreeItem key={i} level={level} kind={kind} icon={icon} label={label} {...extra} />
                    ))}
                  </Tree>
                </Pane>
                <VTrack $parts={[315, 593, 168]}><VThumb /></VTrack>
                <HTrack $parts={[54, 466, 44]}><HThumb /></HTrack>
              </Well>
            </Panel>

            <FilePanel active title={"Quelle - D:\\Compiler\\Demodateien\\"} home={House} status="Ordner/Datei(en): 2/22 - 209,00 MB in 22 Datei(en)">
              <Well $scroll>
                <Pane><Files rows={SOURCE} widths={[117, 177, 274]} wide selected={0} /></Pane>
                <VTrack $parts={[44, 821, 163]}><VThumb /></VTrack>
                <HTrack $parts={[43, 1006, 81]}><HThumb /></HTrack>
              </Well>
            </FilePanel>

            <FilePanel title={"Ziel - C:\\FreePDF64\\Zielverzeichnis\\PDF 27.12.2023\\"} home={Target} status="Ordner/Datei(en): 0/18 - 20,56 MB in 18 Datei(en)">
              <Well>
                <Pane><Files rows={TARGET} widths={[129, 189, 263]} spare={4} /></Pane>
              </Well>
            </FilePanel>
          </Panels>

          <FunctionBar>
            {FUNCTIONS.map((f) => <FunctionButton key={f} disabled={f.startsWith("F7")}>{f}</FunctionButton>)}
          </FunctionBar>
          <ActionBar>
            <FormatButton><Finger />Formatauswahl: PS/PDF zu BMP</FormatButton>
            <Progress value={0} max={100} aria-label="Fortschritt" />
            <StartButton><GreenArrow /><span>Markiert: 1 =&gt; START</span></StartButton>
          </ActionBar>
          <Console>
            <ConsoleText aria-label="Befehlszeile" defaultValue={COMMAND} spellCheck={false} />
            <ConsoleScroll><ArrowTri /><ArrowTri down /></ConsoleScroll>
          </Console>
          <StatusBar>
            <span>Drucker: FreePDF64, Multi File Port | Anzeigen: AUS | Überwachungsordner: C:\FreePDF64\Quellverzeichnis\</span>
            <Grip />
          </StatusBar>
        </Window>
      </Desktop>
    </>
  );
}
